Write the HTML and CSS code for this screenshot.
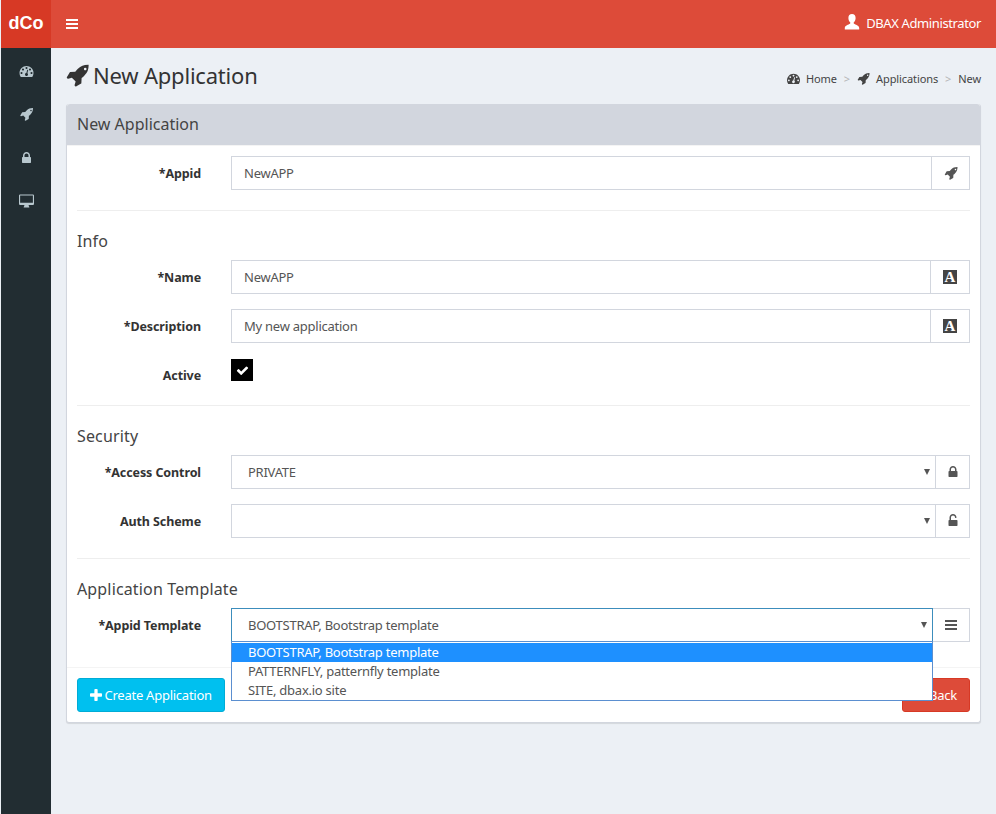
FILE: index.html
```html
<!DOCTYPE html>
<html lang="en">

<head>
    <meta charset="UTF-8">
    <title>New Application</title>
    <link rel="stylesheet" href="styles.css">
</head>

<body>
    <!-- icon sprite -->
    <svg class="sprite" xmlns="http://www.w3.org/2000/svg">
        <symbol id="i-rocket" viewBox="0 0 1664 1792"><path d="M1504 448q0-40-28-68t-68-28-68 28-28 68 28 68 68 28 68-28 28-68zm160-288q0 249-75.500 430.500t-253.500 360.500q-81 80-195 176l-20 379q-2 16-16 26l-384 224q-7 4-16 4-12 0-23-9l-64-64q-13-14-8-32l85-276-281-281-276 85q-3 1-9 1-14 0-23-9l-64-64q-17-19-5-39l224-384q10-14 26-16l379-20q96-114 176-195 188-187 358-258t431-71q14 0 24 9.500t10 22.500z"/></symbol>
        <symbol id="i-dash" viewBox="0 0 1792 1792"><path d="M384 1152q0-53-37.500-90.500t-90.500-37.500-90.500 37.500-37.500 90.500 37.500 90.500 90.500 37.500 90.500-37.500 37.500-90.500zm192-448q0-53-37.500-90.500t-90.500-37.500-90.500 37.500-37.500 90.500 37.500 90.500 90.500 37.500 90.500-37.500 37.500-90.500zm428 481l101-382q6-26-7.500-48.500t-38.500-29.500-48 6.500-30 39.500l-101 382q-60 5-107 43.500t-63 98.500q-20 77 20 146t117 89 146-20 89-117q16-60-6-117t-72-91zm660-33q0-53-37.500-90.500t-90.500-37.500-90.500 37.500-37.500 90.500 37.500 90.500 90.500 37.500 90.500-37.500 37.500-90.500zm-640-640q0-53-37.500-90.500t-90.500-37.500-90.500 37.500-37.500 90.500 37.500 90.500 90.500 37.500 90.500-37.500 37.500-90.500zm448 192q0-53-37.500-90.500t-90.500-37.500-90.500 37.500-37.500 90.500 37.500 90.500 90.500 37.500 90.500-37.500 37.500-90.500zm320 448q0 261-141 483-19 29-54 29h-1402q-35 0-54-29-141-221-141-483 0-182 71-348t191-286 286-191 348-71 348 71 286 191 191 286 71 348z"/></symbol>
        <symbol id="i-lock" viewBox="0 0 1152 1792"><path d="M320 768h512v-192q0-106-75-181t-181-75-181 75-75 181v192zm832 96v576q0 40-28 68t-68 28h-960q-40 0-68-28t-28-68v-576q0-40 28-68t68-28h32v-192q0-184 132-316t316-132 316 132 132 316v192h32q40 0 68 28t28 68z"/></symbol>
        <symbol id="i-unlock" viewBox="0 0 1152 1792"><path d="M1056 768q40 0 68 28t28 68v576q0 40-28 68t-68 28h-960q-40 0-68-28t-28-68v-576q0-40 28-68t68-28h32v-320q0-185 131.500-316.500t316.500-131.500 316.500 131.500 131.500 316.500q0 26-19 45t-45 19h-64q-26 0-45-19t-19-45q0-106-75-181t-181-75-181 75-75 181v320h736z"/></symbol>
        <symbol id="i-desktop" viewBox="0 0 16 14"><path fill-rule="evenodd" d="M1.200 0h13.600A1.200 1.200 0 0 1 16 1.200v8.900a1.200 1.200 0 0 1-1.200 1.200H10.200l.5 1.700H11v1H5v-1h.3l.5-1.700H1.200A1.200 1.200 0 0 1 0 10.100V1.200A1.200 1.200 0 0 1 1.200 0zM1.200 1.200v7.600h13.600V1.200z"/></symbol>
        <symbol id="i-bars" viewBox="0 0 12 10"><path d="M0 0h12v2H0zM0 4h12v2H0zM0 8h12v2H0z"/></symbol>
        <symbol id="i-plus" viewBox="0 0 1408 1408"><path d="M1408 608v192q0 40-28 68t-68 28h-416v416q0 40-28 68t-68 28h-192q-40 0-68-28t-28-68v-416h-416q-40 0-68-28t-28-68v-192q0-40 28-68t68-28h416v-416q0-40 28-68t68-28h192q40 0 68 28t28 68v416h416q40 0 68 28t28 68z"/></symbol>
        <symbol id="i-check" viewBox="0 0 1792 1792"><path d="M1671 566q0 40-28 68l-724 724-136 136q-28 28-68 28t-68-28l-136-136-362-362q-28-28-28-68t28-68l136-136q28-28 68-28t68 28l294 295 656-657q28-28 68-28t68 28l136 136q28 28 28 68z"/></symbol>
        <symbol id="i-user" viewBox="0 0 16 16"><path d="M8 0c2.300 0 3.600 1.700 3.600 3.900 0 1.700-.7 3.400-1.700 4.300-.3.300-.3 1.100.2 1.500C11.300 10.500 15 11.300 15.200 14v1.500H.8V14c.2-2.700 3.900-3.500 5.100-4.300.5-.4.500-1.200.2-1.500-1-.9-1.700-2.600-1.700-4.300C4.400 1.700 5.700 0 8 0z"/></symbol>
    </svg>

    <div class="wrapper">
        <!-- top bar -->
        <header class="topbar">
            <a class="logo" href="#">dCo</a>
            <nav class="navbar">
                <svg class="toggle"><use href="#i-bars"/></svg>
                <span class="user"><svg class="user-icon"><use href="#i-user"/></svg>DBAX Administrator</span>
            </nav>
        </header>

        <div class="main">
            <!-- side menu -->
            <aside class="sidebar">
                <svg class="side-icon"><use href="#i-dash"/></svg>
                <svg class="side-icon"><use href="#i-rocket"/></svg>
                <svg class="side-icon"><use href="#i-lock"/></svg>
                <svg class="side-icon"><use href="#i-desktop"/></svg>
            </aside>

            <main class="content">
                <div class="page-head">
                    <h1><svg class="title-icon"><use href="#i-rocket"/></svg>New Application</h1>
                    <ol class="breadcrumb">
                        <li><svg class="crumb-icon"><use href="#i-dash"/></svg>Home</li>
                        <li class="sep">&gt;</li>
                        <li><svg class="crumb-icon"><use href="#i-rocket"/></svg>Applications</li>
                        <li class="sep">&gt;</li>
                        <li>New</li>
                    </ol>
                </div>

                <section class="box">
                    <h3 class="box-title">New Application</h3>
                    <form class="box-body">
                        <div class="row">
                            <label>*Appid</label>
                            <div class="group">
                                <input class="field" value="NewAPP">
                                <span class="addon addon-rocket"><svg class="addon-icon"><use href="#i-rocket"/></svg></span>
                            </div>
                        </div>
                        <hr>

                        <h4>Info</h4>
                        <div class="row">
                            <label>*Name</label>
                            <div class="group">
                                <input class="field" value="NewAPP">
                                <span class="addon"><span class="font-icon">A</span></span>
                            </div>
                        </div>
                        <div class="row">
                            <label>*Description</label>
                            <div class="group">
                                <input class="field" value="My new application">
                                <span class="addon"><span class="font-icon">A</span></span>
                            </div>
                        </div>
                        <div class="row row-check">
                            <label>Active</label>
                            <span class="checkbox"><svg class="check-icon"><use href="#i-check"/></svg></span>
                        </div>
                        <hr>

                        <h4>Security</h4>
                        <div class="row">
                            <label>*Access Control</label>
                            <div class="group">
                                <div class="select">PRIVATE<i class="arrow"></i></div>
                                <span class="addon addon-small"><svg class="addon-icon"><use href="#i-lock"/></svg></span>
                            </div>
                        </div>
                        <div class="row">
                            <label>Auth Scheme</label>
                            <div class="group">
                                <div class="select"><i class="arrow"></i></div>
                                <span class="addon addon-small"><svg class="addon-icon"><use href="#i-unlock"/></svg></span>
                            </div>
                        </div>
                        <hr>

                        <h4>Application Template</h4>
                        <div class="row row-last">
                            <label>*Appid Template</label>
                            <div class="group">
                                <div class="select select-open">BOOTSTRAP, Bootstrap template<i class="arrow"></i>
                                    <ul class="dropdown">
                                        <li class="active">BOOTSTRAP, Bootstrap template</li>
                                        <li>PATTERNFLY, patternfly template</li>
                                        <li>SITE, dbax.io site</li>
                                    </ul>
                                </div>
                                <span class="addon addon-mid"><svg class="addon-bars"><use href="#i-bars"/></svg></span>
                            </div>
                        </div>
                    </form>
                    <div class="box-footer">
                        <a class="btn btn-create" href="#"><svg class="plus-icon"><use href="#i-plus"/></svg>Create Application</a>
                        <a class="btn btn-back" href="#">Back</a>
                    </div>
                </section>
            </main>
        </div>
    </div>
</body>

</html>
```

FILE: styles.css
```css
* {
    box-sizing: border-box;
    padding: 0;
    margin: 0;
}

body {
    background-color: #ecf0f5;
    color: #333;
    font-family: "Noto Sans", "Liberation Sans", sans-serif;
    font-size: 13px;
    letter-spacing: -0.25px;
}

.sprite {
    display: none;
}

svg {
    fill: currentColor;
    flex: none;
}

.wrapper {
    display: flex;
    flex-direction: column;
    min-height: 814px;
    padding-left: 1px;
}

/* top bar */
.topbar {
    display: flex;
    height: 48px;
}

.logo {
    width: 50px;
    background-color: #d73925;
    color: #fff;
    font-family: "Liberation Sans", sans-serif;
    font-size: 18px;
    font-weight: bold;
    letter-spacing: 0;
    line-height: 46px;
    text-align: center;
    text-decoration: none;
}

.navbar {
    flex: 1;
    display: flex;
    align-items: center;
    justify-content: space-between;
    padding: 0 15px;
    background-color: #dd4b39;
    color: #fff;
}

.toggle {
    width: 12px;
    height: 10px;
}

.user {
    display: flex;
    align-items: center;
    margin-top: -2px;
    font-size: 13px;
    letter-spacing: -0.38px;
}

.user-icon {
    width: 16px;
    height: 16px;
    margin: -3px 6px 0 0;
}

/* side menu */
.main {
    flex: 1;
    display: flex;
}

.sidebar {
    width: 50px;
    display: flex;
    flex-direction: column;
    align-items: center;
    gap: 29.5px;
    padding-top: 15.5px;
    background-color: #222d32;
    color: #b8c7ce;
}

.side-icon {
    width: 15px;
    height: 14px;
}

.content {
    flex: 1;
    padding: 0 15px;
}

/* page title */
.page-head {
    display: flex;
    align-items: center;
    justify-content: space-between;
    height: 56px;
}

h1 {
    display: flex;
    align-items: center;
    margin-top: -2px;
    font-size: 22px;
    font-weight: normal;
    letter-spacing: -0.2px;
}

.title-icon {
    width: 23px;
    height: 24px;
    margin-right: 4px;
}

.breadcrumb {
    display: flex;
    align-items: center;
    gap: 7px;
    margin-top: 4px;
    list-style: none;
    font-size: 11px;
    letter-spacing: -0.1px;
    color: #444;
}

.breadcrumb li {
    display: flex;
    align-items: center;
}

.breadcrumb .sep {
    color: #b5b5b5;
}

.crumb-icon {
    width: 13px;
    height: 13px;
    margin-right: 6px;
}

/* box */
.box {
    background-color: #fff;
    border: 1px solid #d2d6de;
    border-top: 0;
    border-radius: 3px;
    box-shadow: 0 1px 1px rgba(0, 0, 0, 0.1);
}

.box-title {
    height: 42px;
    padding-left: 10px;
    background-color: #d2d6de;
    border-bottom: 1px solid #f4f4f4;
    border-radius: 3px 3px 0 0;
    color: #444;
    font-size: 16px;
    font-weight: normal;
    letter-spacing: 0;
    line-height: 40px;
}

.box-body {
    padding: 10px;
}

.row {
    display: grid;
    grid-template-columns: 124px 1fr;
    column-gap: 30px;
    align-items: center;
    margin-bottom: 15px;
}

.row label {
    font-weight: bold;
    font-size: 12.5px;
    letter-spacing: -0.1px;
    text-align: right;
}

.row-check {
    align-items: start;
    height: 27px;
    margin-bottom: 20px;
}

.row-check label {
    line-height: 18px;
    margin-top: 9px;
}

.group {
    display: flex;
    height: 34px;
}

.field,
.select {
    flex: 1;
    min-width: 0;
    height: 34px;
    border: 1px solid #d2d6de;
    background-color: #fff;
    color: #555;
    font: inherit;
    letter-spacing: inherit;
}

.field {
    padding: 0 12px;
}

.select {
    position: relative;
    padding: 0 16px;
    line-height: 32px;
}

.select-open {
    border-color: #3c8dbc;
}

.arrow {
    position: absolute;
    top: 13px;
    right: 5px;
    border-top: 6px solid #555;
    border-left: 3px solid transparent;
    border-right: 3px solid transparent;
}

.addon {
    display: flex;
    align-items: center;
    justify-content: center;
    width: 39px;
    border: 1px solid #d2d6de;
    border-left: 0;
    color: #555;
}

.addon-rocket {
    width: 38px;
}

.addon-small {
    width: 34px;
}

.addon-mid {
    width: 37px;
}

.addon-icon {
    width: 14px;
    height: 14px;
}

.addon-bars {
    width: 12px;
    height: 10px;
}

.font-icon {
    width: 14px;
    height: 14px;
    background-color: #444;
    color: #fff;
    font-family: "Liberation Serif", serif;
    font-size: 15px;
    font-weight: bold;
    letter-spacing: 0;
    line-height: 15px;
    text-align: center;
}

.checkbox {
    display: flex;
    align-items: center;
    justify-content: center;
    width: 22px;
    height: 22px;
    margin-top: 1px;
    background-color: #000;
    color: #fff;
}

.check-icon {
    width: 13px;
    height: 13px;
}

hr {
    height: 1px;
    margin: 20px 0;
    border: 0;
    background-color: #eee;
}

h4 {
    height: 19px;
    margin-bottom: 10px;
    color: #444;
    font-size: 16px;
    font-weight: normal;
    letter-spacing: 0.15px;
    line-height: 20px;
}

/* open select list */
.dropdown {
    position: absolute;
    top: 32px;
    left: -1px;
    right: -1px;
    z-index: 2;
    padding-top: 1px;
    background-color: #fff;
    border: 1px solid #5b8fd0;
    list-style: none;
}

.dropdown li {
    height: 19px;
    padding-left: 16px;
    line-height: 19px;
}

.dropdown .active {
    background-color: #1e90ff;
    color: #fff;
}

/* buttons */
.box-footer {
    display: flex;
    justify-content: space-between;
    padding: 10px;
    border-top: 1px solid #f4f4f4;
}

.btn {
    display: flex;
    align-items: center;
    height: 34px;
    padding: 0 12px;
    border: 1px solid;
    border-radius: 3px;
    color: #fff;
    text-decoration: none;
}

.btn-create {
    background-color: #00c0ef;
    border-color: #00acd6;
}

.btn-back {
    width: 68px;
    justify-content: flex-end;
    background-color: #dd4b39;
    border-color: #d73925;
}

.plus-icon {
    width: 12px;
    height: 12px;
    margin-right: 2.500px;
}
```
